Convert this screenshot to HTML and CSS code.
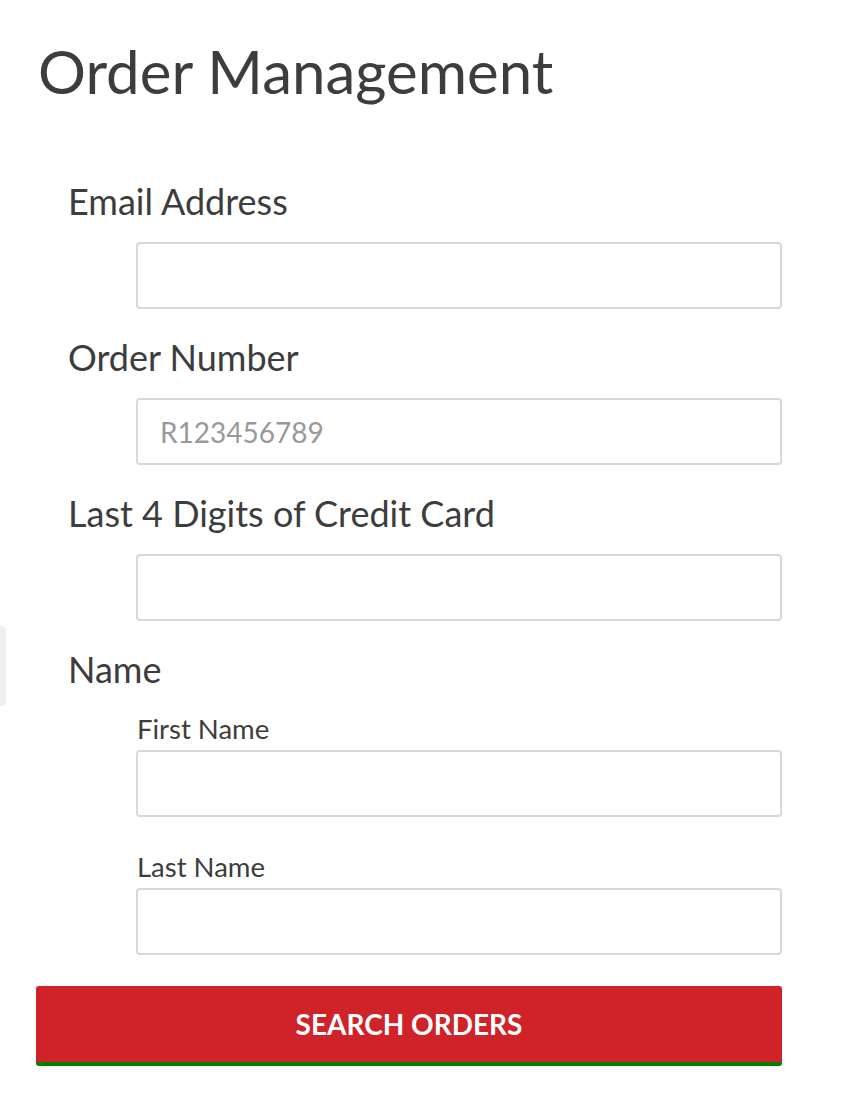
FILE: index.html
```html
<!doctype html>
<html>
<head>
  <title>Order Management</title>
  <meta charset='UTF-8'>
  <link rel="stylesheet" href="styles.css">
</head>
<body>
  <div class='side-tab'></div>
  <main class='page'>
    <h1>Order Management</h1>
    <form class='lookup'>
      <div class='field'>
        <label for='email'>Email Address</label>
        <input id='email' type='email'>
      </div>
      <div class='field'>
        <label for='order'>Order Number</label>
        <input id='order' type='text' placeholder='R123456789'>
      </div>
      <div class='field'>
        <label for='card'>Last 4 Digits of Credit Card</label>
        <input id='card' type='text'>
      </div>
      <div class='field name' role='group'>
        <span class='group-label'>Name</span>
        <div class='sub'>
          <label for='first'>First Name</label>
          <input id='first' type='text'>
        </div>
        <div class='sub'>
          <label for='last'>Last Name</label>
          <input id='last' type='text'>
        </div>
      </div>
      <button type='button'>Search Orders</button>
    </form>
  </main>
</body>
</html>
```

FILE: styles.css
```css
body {
  margin: 0;
  background: #fff;
  color: #3d3d3d;
  font-family: Lato, "Open Sans", sans-serif
}
.side-tab {
  position: absolute;
  left: -6px;
  top: 626px;
  width: 12px;
  height: 80px;
  background: #efefef;
  border-radius: 4px
}
.page {
  width: 746px;
  padding: 31px 0 0 36px
}
h1 {
  margin: 0 0 0 2px;
  font-size: 60px;
  font-weight: 400;
  line-height: 80px
}
.lookup {
  margin-top: 70px;
  display: flex;
  flex-direction: column
}
.field {
  display: flex;
  flex-direction: column;
  align-items: flex-end;
  margin-bottom: 28px
}
.field > label, .group-label {
  align-self: flex-start;
  margin: 0 0 21px 32px;
  font-size: 36px;
  line-height: 40px
}
input {
  box-sizing: border-box;
  width: 646px;
  height: 67px;
  border: 2px solid #d8d8d8;
  border-radius: 4px;
  padding: 0 22px;
  font-family: inherit;
  font-size: 28px;
  color: #3d3d3d;
  outline: none
}
input::placeholder { color: #999 }
.name { margin-bottom: 0 }
.name > .group-label { margin-bottom: 23px }
.sub {
  display: flex;
  flex-direction: column;
  margin-bottom: 33px
}
.sub:last-child { margin-bottom: 31px }
.sub label {
  font-size: 27.5px;
  line-height: 33px;
  margin: 0 0 5px 1px
}
button {
  width: 746px;
  height: 80px;
  background: #cf2229;
  border: 0;
  border-bottom: 4px solid #008000;
  border-radius: 3px;
  color: #fff;
  font-family: inherit;
  font-weight: 700;
  font-size: 28px;
  text-transform: uppercase;
  padding: 0
}
```
